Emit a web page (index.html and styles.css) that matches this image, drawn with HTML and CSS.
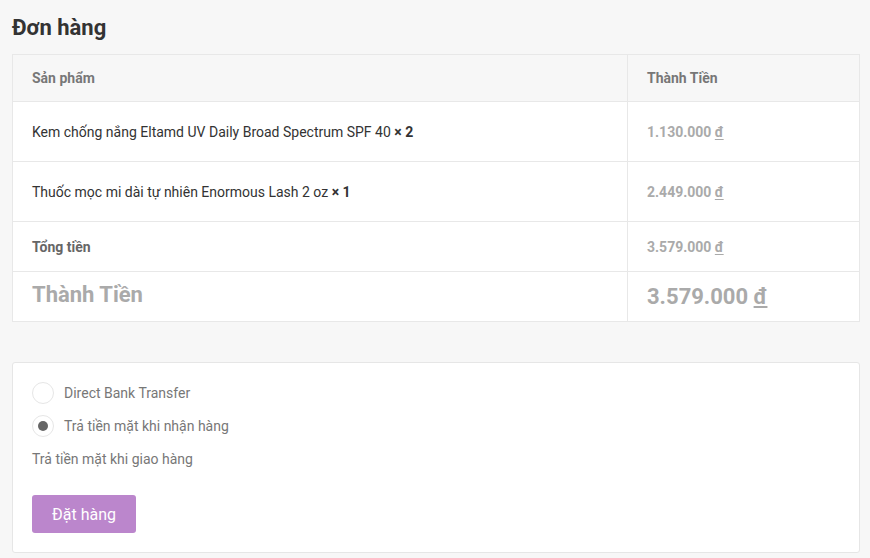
FILE: index.html
```html
<!DOCTYPE html>
<html lang="vi">
<head>
<meta charset="utf-8">
<link rel="stylesheet" href="styles.css">
</head>
<body>
<div class="page">
  <h2 class="title">Đơn hàng</h2>
  <table class="order">
    <thead>
      <tr><th class="c1">Sản phẩm</th><th class="c2">Thành Tiền</th></tr>
    </thead>
    <tbody>
      <tr class="item"><td class="c1">Kem chống nắng Eltamd UV Daily Broad Spectrum SPF 40 <b>× 2</b></td><td class="c2 price">1.130.000 <u>đ</u></td></tr>
      <tr class="item"><td class="c1">Thuốc mọc mi dài tự nhiên Enormous Lash 2 oz <b>× 1</b></td><td class="c2 price">2.449.000 <u>đ</u></td></tr>
      <tr class="sub"><td class="c1">Tổng tiền</td><td class="c2 price">3.579.000 <u>đ</u></td></tr>
      <tr class="total"><td class="c1">Thành Tiền</td><td class="c2">3.579.000 <u>đ</u></td></tr>
    </tbody>
  </table>

  <div class="payment">
    <label class="opt"><span class="radio"></span>Direct Bank Transfer</label>
    <label class="opt"><span class="radio checked"></span>Trả tiền mặt khi nhận hàng</label>
    <p class="desc">Trả tiền mặt khi giao hàng</p>
    <button class="btn">Đặt hàng</button>
  </div>
</div>
</body>
</html>
```

FILE: styles.css
```css
html, body { margin: 0; padding: 0; }
body {
  background: #f7f7f7;
  font-family: Roboto, "Noto Sans", sans-serif;
  color: #333;
}
.page { padding: 0 10px 0 12px; }
.title {
  margin: 0;
  padding-top: 14px;
  height: 40px;
  font-size: 22px;
  font-weight: 700;
  line-height: 27px;
  color: #333;
}
.order {
  width: 100%;
  border-collapse: collapse;
  background: #fff;
  border: 1px solid #e8e8e8;
}
.order th, .order td {
  border-top: 1px solid #e8e8e8;
  padding: 0 0 0 19px;
  text-align: left;
  vertical-align: middle;
}
.order .c2 { width: 212px; border-left: 1px solid #e8e8e8; }
.order thead th {
  background: #f7f7f7;
  height: 46px;
  font-size: 14px;
  font-weight: 700;
  color: #777;
}
.order .item td { height: 59px; font-size: 14px; color: #333; }
.order .item b { font-weight: 700; }
.order td.price { font-size: 14px; font-weight: 700; color: #aaa; }
.order .sub td { height: 49px; }
.order .sub td.c1 { font-size: 14px; font-weight: 700; color: #666; }
.order .total td {
  height: 49px;
  font-size: 22px;
  font-weight: 700;
  color: #aaa;
  line-height: 26px;
}
.order .total td.c1 { line-height: 22px; height: 46px; padding-bottom: 3px; }
u { text-decoration: underline; text-underline-offset: 2px; }

.payment {
  box-sizing: border-box;
  margin-top: 40px;
  background: #fff;
  border: 1px solid #e6e6e6;
  border-radius: 3px;
  padding: 19px 19px 0 19px;
  height: 191px;
}
.opt {
  display: flex;
  align-items: center;
  height: 22px;
  margin-bottom: 11px;
  font-size: 14px;
  color: #777;
}
.radio {
  box-sizing: border-box;
  width: 22px;
  height: 22px;
  border: 1px solid #e6e6e6;
  border-radius: 50%;
  margin-right: 10px;
  display: flex;
  align-items: center;
  justify-content: center;
  flex: none;
}
.radio.checked::after {
  content: "";
  width: 10px;
  height: 10px;
  border-radius: 50%;
  background: #666;
}
.desc {
  margin: 0 0 26px 0;
  padding-top: 2px;
  height: 19px;
  line-height: 19px;
  font-size: 14px;
  color: #777;
}
.btn {
  display: block;
  width: 104px;
  height: 38px;
  border: none;
  border-radius: 3px;
  background: #bb86cc;
  color: #fff;
  font-family: Roboto, "Noto Sans", sans-serif;
  font-size: 16px;
  padding: 0;
}
```
